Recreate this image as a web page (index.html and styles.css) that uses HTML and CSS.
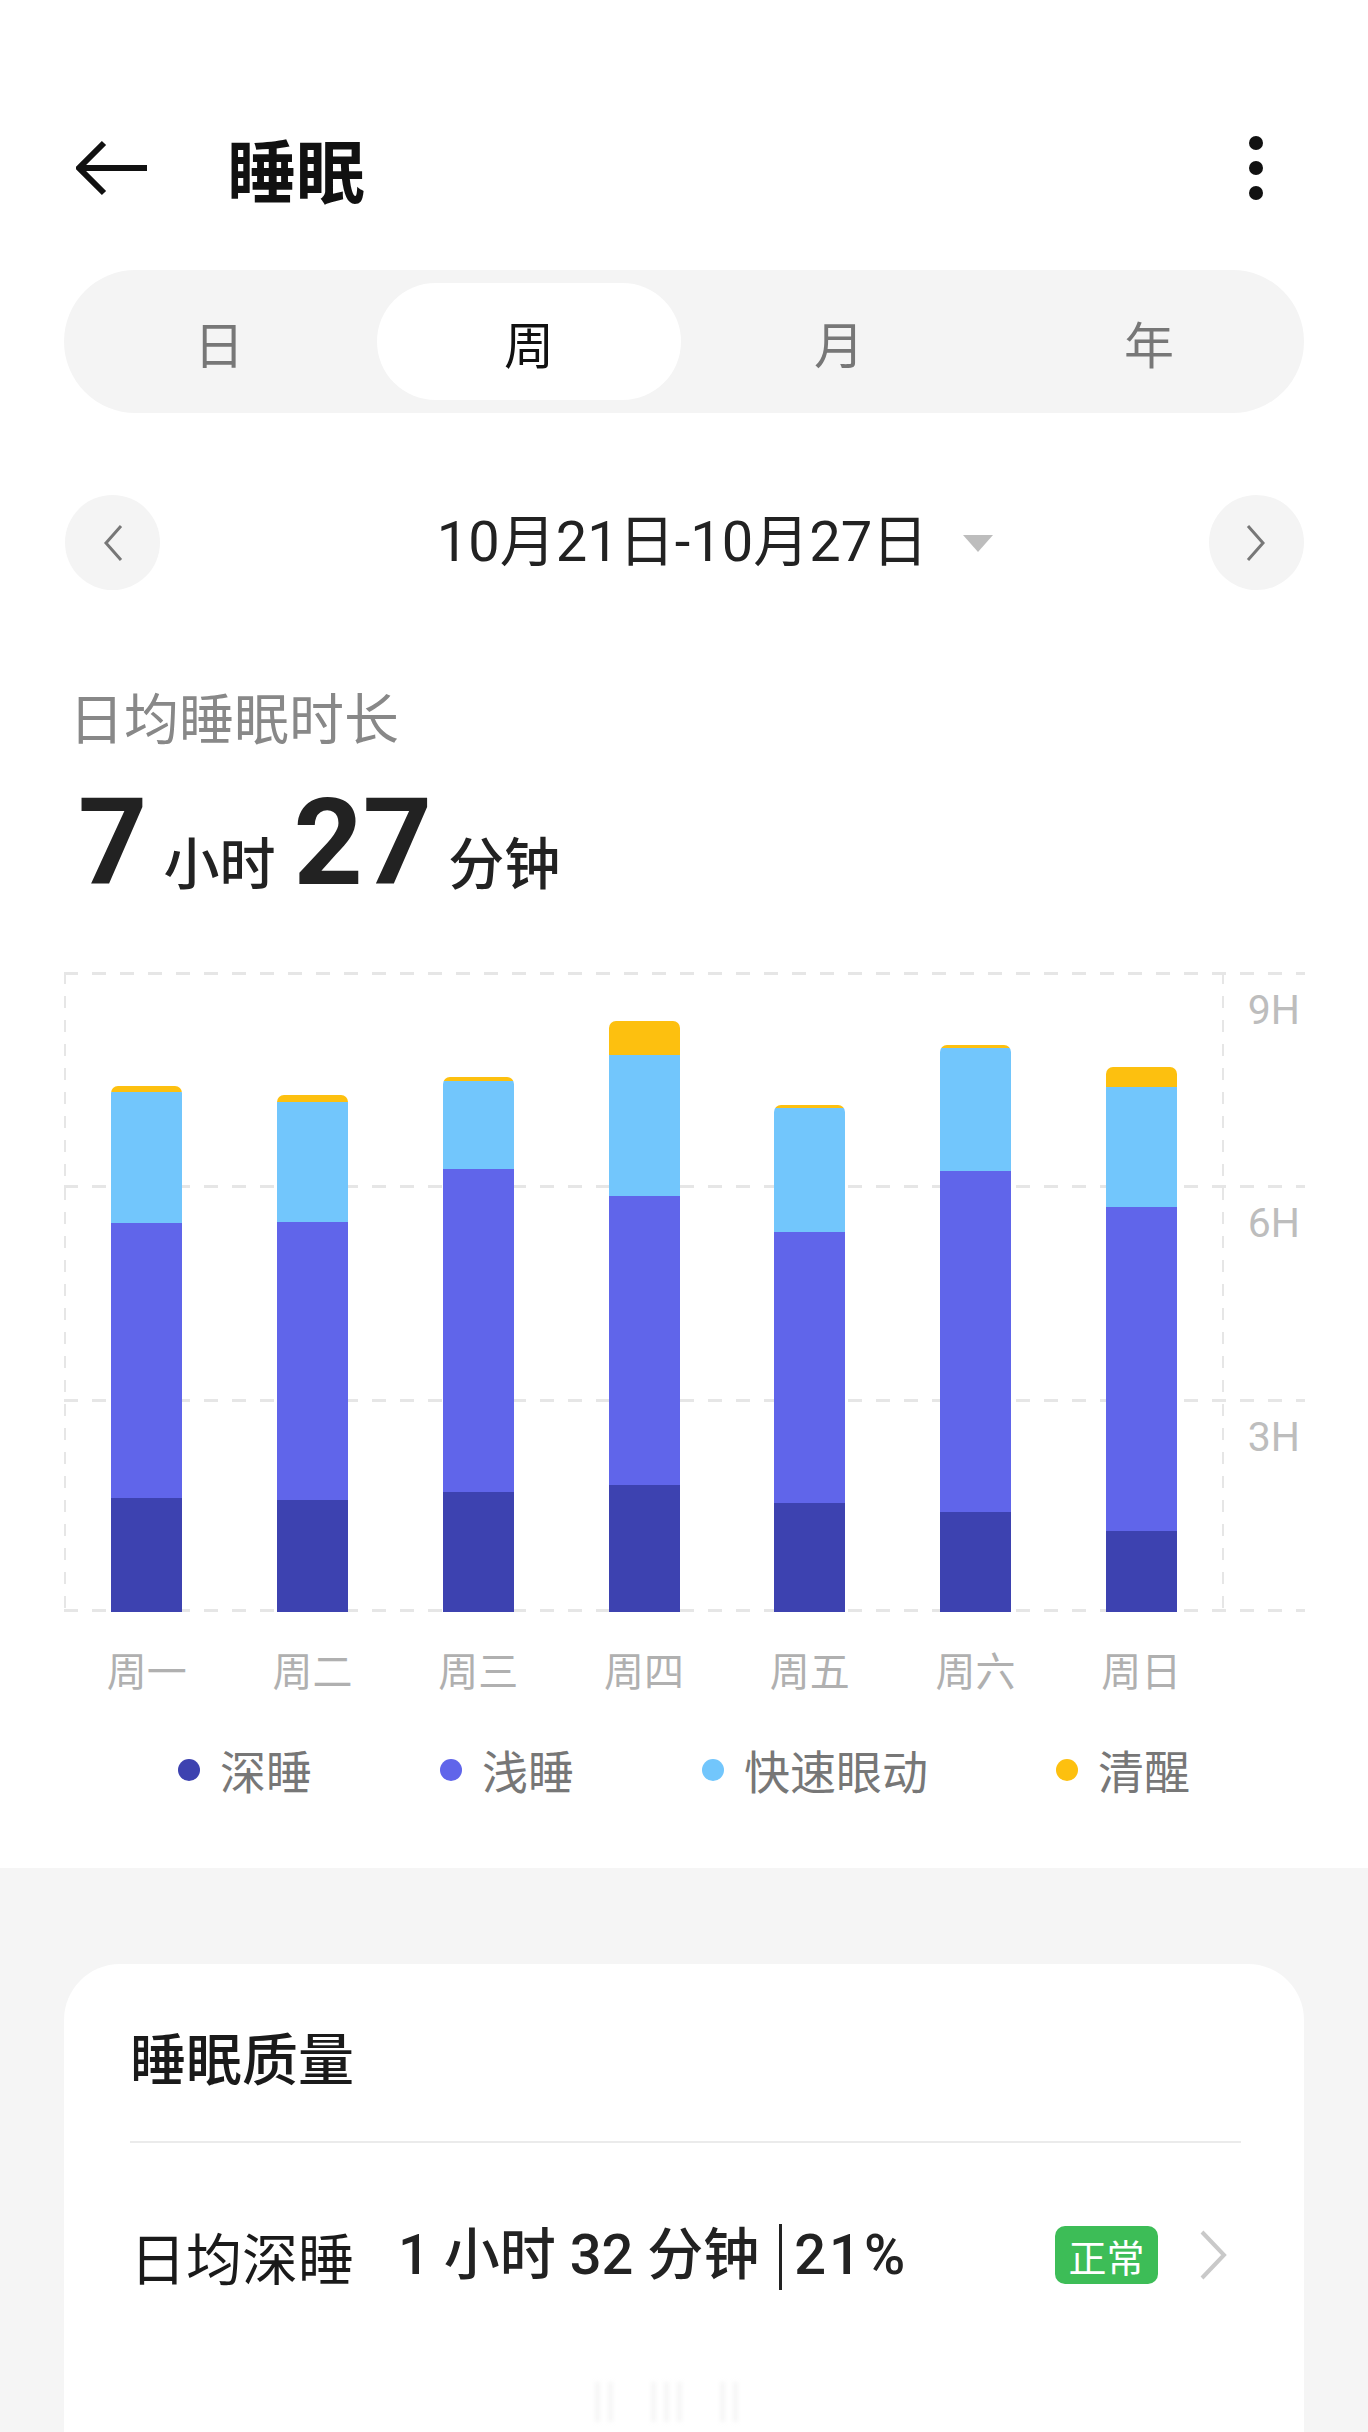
FILE: index.html
```html
<!DOCTYPE html>
<html lang="zh-CN">
<head>
    <meta charset="UTF-8">
    <meta name="viewport" content="width=device-width, initial-scale=1.0">
    <title>睡眠</title>
    <link rel="stylesheet" href="styles.css">
</head>
<body>
    <div class="top">
        <header class="header">
            <svg class="back" width="72" height="56" viewBox="0 0 72 56"><path d="M28 3 L3 28 L28 53 M3 28 H71"/></svg>
            <h1>睡眠</h1>
            <svg class="more" width="16" height="64" viewBox="0 0 16 64"><circle cx="8" cy="7" r="7"/><circle cx="8" cy="32" r="7"/><circle cx="8" cy="57" r="7"/></svg>
        </header>

        <div class="tabs">
            <div class="tab">日</div>
            <div class="tab active">周</div>
            <div class="tab">月</div>
            <div class="tab">年</div>
        </div>

        <div class="date-row">
            <button class="nav"><svg width="24" height="40" viewBox="0 0 24 40"><path d="M20 3 L5 20 L20 37"/></svg></button>
            <div class="date">10月21日-10月27日</div>
            <button class="nav"><svg width="24" height="40" viewBox="0 0 24 40"><path d="M4 3 L19 20 L4 37"/></svg></button>
        </div>

        <div class="avg-label">日均睡眠时长</div>
        <div class="avg-value"><span class="big">7</span><span class="unit">小时</span><span class="big">27</span><span class="unit">分钟</span></div>

        <div class="chart">
            <div class="grid-row"><span>9H</span></div>
            <div class="grid-row"><span>6H</span></div>
            <div class="grid-row"><span>3H</span></div>
            <div class="bars">
                <div class="slot"><div class="bar"><i class="awake" style="height:6px"></i><i class="rem" style="height:131px"></i><i class="light" style="height:275px"></i><i class="deep" style="height:114px"></i></div></div>
                <div class="slot"><div class="bar"><i class="awake" style="height:7px"></i><i class="rem" style="height:120px"></i><i class="light" style="height:278px"></i><i class="deep" style="height:112px"></i></div></div>
                <div class="slot"><div class="bar"><i class="awake" style="height:4px"></i><i class="rem" style="height:88px"></i><i class="light" style="height:323px"></i><i class="deep" style="height:120px"></i></div></div>
                <div class="slot"><div class="bar"><i class="awake" style="height:34px"></i><i class="rem" style="height:141px"></i><i class="light" style="height:289px"></i><i class="deep" style="height:127px"></i></div></div>
                <div class="slot"><div class="bar"><i class="awake" style="height:3px"></i><i class="rem" style="height:124px"></i><i class="light" style="height:271px"></i><i class="deep" style="height:109px"></i></div></div>
                <div class="slot"><div class="bar"><i class="awake" style="height:3px"></i><i class="rem" style="height:123px"></i><i class="light" style="height:341px"></i><i class="deep" style="height:100px"></i></div></div>
                <div class="slot"><div class="bar"><i class="awake" style="height:20px"></i><i class="rem" style="height:120px"></i><i class="light" style="height:324px"></i><i class="deep" style="height:81px"></i></div></div>
            </div>
        </div>

        <div class="days">
            <span>周一</span><span>周二</span><span>周三</span><span>周四</span><span>周五</span><span>周六</span><span>周日</span>
        </div>

        <div class="legend">
            <div class="key"><i class="deep"></i>深睡</div>
            <div class="key"><i class="light"></i>浅睡</div>
            <div class="key"><i class="rem"></i>快速眼动</div>
            <div class="key"><i class="awake"></i>清醒</div>
        </div>
    </div>

    <div class="lower">
        <div class="card">
            <div class="card-title">睡眠质量</div>
            <div class="row">
                <span class="row-label">日均深睡</span>
                <span class="row-value">1 小时 32 分钟<span class="sep"></span><span class="pct">21%</span></span>
                <span class="badge">正常</span>
                <svg class="chev" width="30" height="52" viewBox="0 0 30 52"><path d="M4 3 L26 26 L4 49"/></svg>
            </div>
            <div class="ghost"><i></i><i></i><i class="gap"></i><i></i><i></i><i class="gap"></i><i></i></div>
        </div>
    </div>
</body>
</html>
```

FILE: styles.css
```css
* { box-sizing: border-box; }
body { margin: 0; font-family: "Noto Sans CJK SC", sans-serif; color: #1a1a1a; background: #f5f5f5; }
.top { background: #fff; padding: 118px 0 71px; }

.header { display: flex; align-items: center; height: 100px; }
.back { margin-left: 76px; fill: none; stroke: #111; stroke-width: 6; }
.header h1 { margin: 0 0 0 79px; font-size: 69px; line-height: 1.2; font-weight: 700; color: #111; }
.more { margin-left: auto; margin-right: 104px; fill: #111; }

.tabs { margin: 52px 64px 0; height: 143px; padding: 13px 0; background: #f4f4f4; border-radius: 72px; display: grid; grid-template-columns: repeat(4, 1fr); }
.tab { display: flex; align-items: center; justify-content: center; font-size: 50px; color: #777; border-radius: 60px; }
.tab.active { background: #fff; color: #111; margin: 0 3px; }

.date-row { margin: 82px 64px 0 65px; display: flex; align-items: center; justify-content: space-between; }
.nav { width: 95px; height: 95px; border: 0; border-radius: 50%; background: #f4f4f4; padding: 0; display: flex; align-items: center; justify-content: center; }
.nav svg { fill: none; stroke: #777; stroke-width: 3; }
.date { position: relative; font-family: Roboto, "Noto Sans CJK SC", sans-serif; font-size: 56px; line-height: 1.2; color: #222; margin-left: -4px; }
.date::after { content: ""; position: absolute; right: -65px; top: 50%; margin-top: -8px; border-left: 15px solid transparent; border-right: 15px solid transparent; border-top: 17px solid #bdbdbd; }

.avg-label { margin: 92px 0 0 69px; font-size: 55px; line-height: 1.2; color: #888; }
.avg-value { margin: 35px 0 0 78px; height: 120px; line-height: 120px; font-family: Roboto, "Noto Sans CJK SC", sans-serif; color: #222; }
.big { font-size: 121px; font-weight: 700; }
.unit { font-family: "Noto Sans CJK SC", sans-serif; font-size: 56px; font-weight: 500; margin: 0 18px 0 16px; }

.chart { position: relative; margin: 69px 63px 0 64px; height: 640px; display: grid; grid-template-rows: repeat(3, 1fr);
    background: repeating-linear-gradient(90deg, #e6e6e6 0 14px, transparent 14px 28px) left bottom / 100% 3px no-repeat; }
.grid-row { padding: 14px 5px 0 0; text-align: right; font-family: Roboto, sans-serif; font-size: 41px; line-height: 1.2; color: #bdbdbd;
    background: repeating-linear-gradient(90deg, #e6e6e6 0 14px, transparent 14px 28px) left top / 100% 3px no-repeat; }
.bars { position: absolute; top: 0; bottom: 0; left: 0; width: 1160px; display: flex; align-items: flex-end;
    background: repeating-linear-gradient(180deg, #e6e6e6 0 12px, transparent 12px 24px) left top / 2px 100% no-repeat,
                repeating-linear-gradient(180deg, #e6e6e6 0 12px, transparent 12px 24px) right top / 2px 100% no-repeat; }
.slot { flex: 1; display: flex; justify-content: center; }
.bar { width: 71px; display: flex; flex-direction: column; border-radius: 7px 7px 0 0; overflow: hidden; }
.bar i { display: block; }
.awake { background: #fdc00f; }
.rem { background: #72c6fc; }
.light { background: #6065ea; }
.deep { background: #3d42b0; }

.days { width: 1160px; margin: 33px 0 0 64px; display: flex; }
.days span { flex: 1; text-align: center; font-size: 40px; line-height: 1.2; color: #b0b0b0; }

.legend { margin-top: 49px; display: flex; justify-content: center; gap: 128px; }
.key { display: flex; align-items: center; gap: 20px; font-size: 46px; line-height: 1.2; color: #777; }
.key i { width: 22px; height: 22px; border-radius: 50%; }

.lower { padding: 96px 64px 0; }
.card { background: #fff; border-radius: 56px 56px 0 0; padding: 58px 63px 120px 66px; }
.card-title { font-size: 56px; line-height: 1.2; font-weight: 500; padding-bottom: 52px; border-bottom: 2px solid #ebebeb; }
.row { display: flex; align-items: center; margin-top: 77px; }
.row-label { font-size: 56px; line-height: 1.2; }
.row-value { margin-left: 44px; display: flex; align-items: center; font-family: Roboto, "Noto Sans CJK SC", sans-serif; font-size: 56px; line-height: 1.2; font-weight: 500; color: #222; }
.sep { width: 3px; height: 66px; background: #222; margin: 4px 12px 0 20px; }
.pct { letter-spacing: 3px; }
.badge { margin-left: auto; width: 103px; height: 58px; border-radius: 10px; background: #3dbd57; color: #fff; font-size: 38px; display: flex; align-items: center; justify-content: center; }
.chev { margin: 0 13px 0 40px; fill: none; stroke: #c9c9c9; stroke-width: 4; }
.ghost { display: flex; gap: 10px; margin: 92px 0 0 466px; height: 40px; }
.ghost i { width: 3px; background: #f0f0f0; filter: blur(2px); }
.ghost i.gap { margin-left: 30px; }
```
